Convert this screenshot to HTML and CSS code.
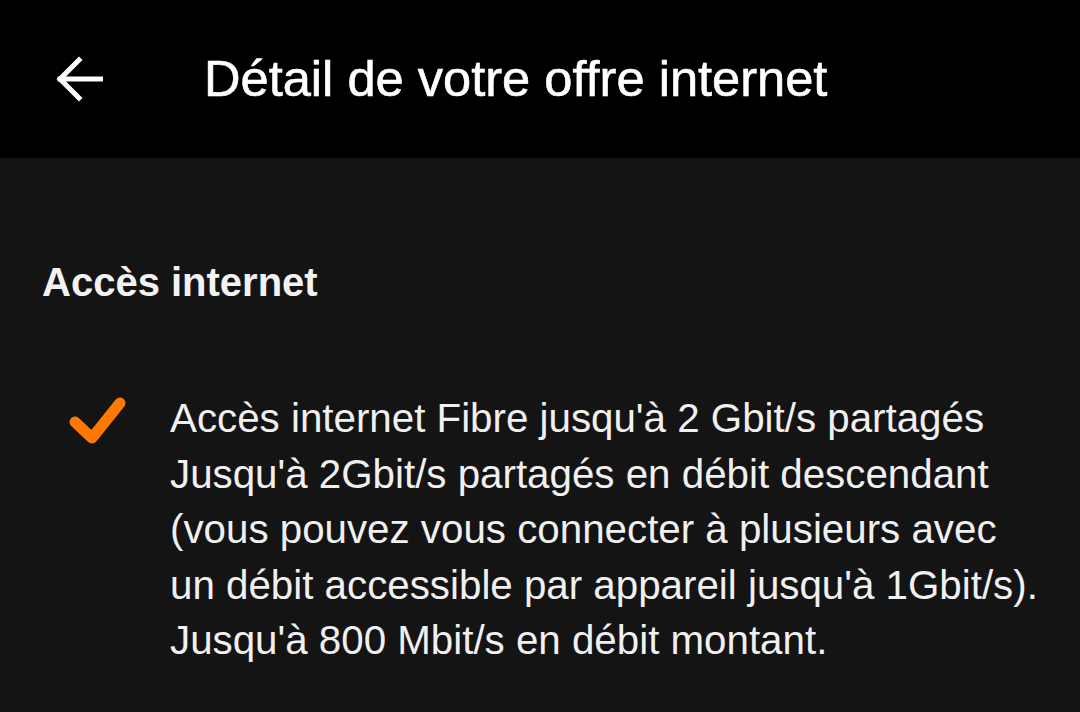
FILE: index.html
```html
<!DOCTYPE html>
<html lang="fr">
<head>
<meta charset="utf-8">
<title>Détail de votre offre internet</title>
<link rel="stylesheet" href="styles.css">
</head>
<body>
<header class="topbar">
  <svg class="back" width="48" height="46" viewBox="0 0 48 46" aria-hidden="true">
    <path d="M46 23H5M24 4L5 23L24 42" fill="none" stroke="#fff" stroke-width="5" stroke-linecap="square" stroke-linejoin="miter"/>
  </svg>
  <h1 class="title">Détail de votre offre internet</h1>
</header>
<main class="content">
  <h2 class="section-title">Accès internet</h2>
  <div class="feature">
    <svg class="check" width="60" height="54" viewBox="0 0 60 54" aria-hidden="true">
      <path d="M8 30L25 46L53 11" fill="none" stroke="#ff7900" stroke-width="11" stroke-linecap="round" stroke-linejoin="round"/>
    </svg>
    <p class="feature-text">Accès internet Fibre jusqu'à 2 Gbit/s partagés<br>Jusqu'à 2Gbit/s partagés en débit descendant<br>(vous pouvez vous connecter à plusieurs avec<br>un débit accessible par appareil jusqu'à 1Gbit/s).<br>Jusqu'à 800 Mbit/s en débit montant.</p>
  </div>
</main>
</body>
</html>
```
FILE: styles.css
```css
html, body {
  margin: 0;
  padding: 0;
  height: 100%;
}
body {
  background: #141414;
  color: #f2f2f2;
  font-family: "Liberation Sans", Arial, sans-serif;
  overflow: hidden;
}
.topbar {
  height: 158px;
  background: #000;
  display: flex;
  align-items: center;
  padding-left: 55px;
  box-sizing: border-box;
}
.back {
  display: block;
  flex: none;
}
.title {
  margin: 0 0 0 101px;
  font-size: 50.6px;
  font-weight: 400;
  color: #fff;
  line-height: 60px;
  -webkit-text-stroke: 0.6px #fff;
}
.content {
  padding: 100px 0 0 42px;
}
.section-title {
  margin: 0;
  font-size: 40px;
  font-weight: 700;
  line-height: 48px;
  color: #f2f2f2;
}
.feature {
  display: flex;
  align-items: flex-start;
  margin-top: 85px;
  padding-left: 25px;
}
.check {
  display: block;
  flex: none;
  margin-top: 1px;
}
.feature-text {
  margin: 0 0 0 43px;
  font-size: 40.3px;
  line-height: 55.5px;
  color: #f0f0f0;
}
```
